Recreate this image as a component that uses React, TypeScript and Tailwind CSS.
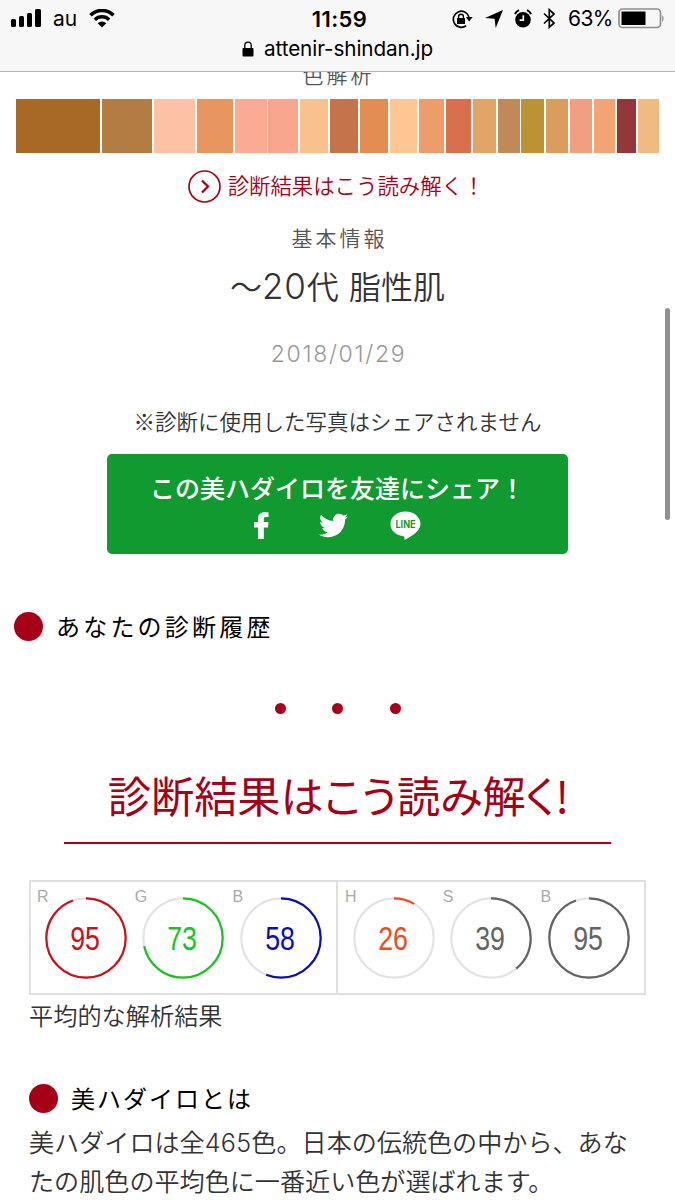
import { FaTwitter } from 'react-icons/fa';

const SWATCHES = [
  { color: '#a86826', width: 84 },
  { color: '#b37c42', width: 50 },
  { color: '#fdc1a5', width: 41 },
  { color: '#e7965f', width: 36 },
  { color: '#fbab94', width: 32 },
  { color: '#f8a68d', width: 30 },
  { color: '#f8c18d', width: 28 },
  { color: '#c5734a', width: 28 },
  { color: '#e48d53', width: 28 },
  { color: '#fcc793', width: 27 },
  { color: '#ed9d69', width: 25 },
  { color: '#d8704f', width: 25 },
  { color: '#e2a467', width: 23 },
  { color: '#bf8a57', width: 22 },
  { color: '#bc9234', width: 23 },
  { color: '#dc9c5d', width: 22 },
  { color: '#f29e83', width: 22 },
  { color: '#f2a475', width: 21 },
  { color: '#94363a', width: 19 },
  { color: '#f1ba82', width: 21 },
];

type Gauge = { label: string; value: number; ratio: number; color: string };

const RGB: Gauge[] = [
  { label: 'R', value: 95, ratio: 0.945, color: '#cc1019' },
  { label: 'G', value: 73, ratio: 0.715, color: '#16c41d' },
  { label: 'B', value: 58, ratio: 0.56, color: '#0d0cb8' },
];

const HSB: Gauge[] = [
  { label: 'H', value: 26, ratio: 0.085, color: '#f04a18' },
  { label: 'S', value: 39, ratio: 0.39, color: '#636363' },
  { label: 'B', value: 95, ratio: 0.945, color: '#636363' },
];

function StatusBar() {
  return (
    <div className="flex h-9 items-center pl-[11px] pr-[10px] pt-px text-black">
      <div className="flex flex-1 items-center">
        <svg width="31" height="19" viewBox="0 0 31 19">
          <rect x="0" y="10" width="5" height="8" rx="1.5" />
          <rect x="8" y="7" width="5" height="11" rx="1.5" />
          <rect x="16" y="4" width="5" height="14" rx="1.5" />
          <rect x="24" y="0" width="6" height="18" rx="1.5" />
        </svg>
        <span className="ml-[11px] text-[21px] leading-none">au</span>
        <svg className="ml-3" width="26" height="19" viewBox="0 0 26 19" fill="none" stroke="black">
          <path d="M1.5 6.3a16.2 16.2 0 0 1 23 0" strokeWidth="3.6" />
          <path d="M5.8 10.8a10.2 10.2 0 0 1 14.4 0" strokeWidth="3.4" />
          <path d="M13 18.5 8.7 14.2a6.1 6.1 0 0 1 8.6 0z" fill="black" stroke="none" />
        </svg>
      </div>
      <span className="ml-[3px] text-[22px] font-semibold leading-none tracking-[0.4px]">11:59</span>
      <div className="flex flex-1 items-center justify-end">
        <svg width="21" height="20" viewBox="0 0 21 20" fill="none" stroke="black" strokeWidth="1.7">
          <path d="M14.2 16.6A8 8 0 1 1 17 8" />
          <path d="M13.9 8h6.700l-3.400 4.400z" fill="black" stroke="none" />
          <rect x="5" y="9" width="8" height="6" rx="0.6" fill="black" stroke="none" />
          <path d="M6.6 9.5V7.6a2.4 2.4 0 0 1 4.8 0v1.9" strokeWidth="1.4" />
        </svg>
        <svg className="ml-[12px]" width="18" height="18" viewBox="0 0 18 18">
          <path d="M18 0 10.7 18 9.6 8.8 0 7.9z" />
        </svg>
        <svg className="ml-[11px]" width="18" height="19" viewBox="0 0 18 19">
          <circle cx="9" cy="10.7" r="7.8" />
          <path d="M0.9 4.9A9 9 0 0 1 5 1.2M17.1 4.9A9 9 0 0 0 13 1.2" fill="none" stroke="black" strokeWidth="2" />
          <path d="M9.3 6.2v5H5.6" fill="none" stroke="white" strokeWidth="1.7" />
        </svg>
        <svg className="ml-[11px]" width="13" height="21" viewBox="0 0 13 21" fill="none" stroke="black" strokeWidth="1.7">
          <path d="M1 5.5 11 15 6.3 19.3V1.7L11 6 1 15.5" />
        </svg>
        <span className="ml-[12px] text-[21px] leading-none tracking-[-0.5px]">63%</span>
        <svg className="ml-[5px]" width="47" height="21" viewBox="0 0 47 21">
          <rect x="1" y="1" width="41.5" height="18.5" rx="3.5" fill="none" stroke="#8d8d8d" strokeWidth="1.7" />
          <rect x="3.5" y="3.5" width="24" height="13.5" />
          <path d="M44.2 7a5 5 0 0 1 0 7z" fill="#8d8d8d" />
        </svg>
      </div>
    </div>
  );
}

function AddressBar() {
  return (
    <div className="flex h-[35px] items-center justify-center pb-[10px] text-black">
      <svg width="12" height="16" viewBox="0 0 12 16">
        <rect x="0.5" y="7" width="11" height="8.5" rx="1" />
        <path d="M2.8 7.5V4.4a3.2 3.2 0 0 1 6.4 0v3.1" fill="none" stroke="black" strokeWidth="1.3" />
      </svg>
      <span className="ml-2.5 text-[20.7px] leading-6 tracking-[-0.1px]">attenir-shindan.jp</span>
    </div>
  );
}

function FacebookIcon() {
  return (
    <svg width="15" height="28" viewBox="0 0 15 28" fill="white">
      <path d="M4 27V15.500H0V10H4V7C4 2.500 6.500.3 10.500.3H14.500V5H12C10.200 5 9.800 5.800 9.800 7.300V10H14.500L14 15.500H9.800V27z" />
    </svg>
  );
}

function LineIcon() {
  return (
    <svg width="31" height="29" viewBox="0 0 31 29">
      <path d="M15.5 0.5C7 .5.5 6 .5 13c0 6.500 5 11 12.500 12.200 1.500.3 1.700.9 1.400 2.800-.1.800.3 1 1 .6C20 26 30.500 20.500 30.500 13 30.500 6 24 .5 15.500 .5z" fill="white" />
      <text x="15.5" y="16.6" textAnchor="middle" fontSize="10" fontWeight="700" textLength="20" lengthAdjust="spacingAndGlyphs" fill="#119a30">LINE</text>
    </svg>
  );
}

function GaugeCell({ label, value, ratio, color }: Gauge) {
  const length = 2 * Math.PI * 39.7;
  return (
    <div className="relative h-full w-[97.7px] pt-[15px]">
      <span className="absolute -left-px top-[5px] font-['Liberation_Sans'] text-[16px] leading-5 text-[#aaa]">{label}</span>
      <div className="relative ml-[6.5px] h-[82px] w-[82px]">
        <svg width="82" height="82" viewBox="0 0 82 82" fill="none" strokeWidth="2.2">
          <circle cx="41" cy="41" r="39.7" stroke="#e3e3e3" />
          <circle cx="41" cy="41" r="39.7" stroke={color} transform="rotate(-90 41 41)" strokeDasharray={`${length * ratio} ${length}`} />
        </svg>
        <span
          className="absolute inset-0 -left-[2px] flex scale-x-[0.81] items-center justify-center font-['Liberation_Sans'] text-[33px] leading-none"
          style={{ color }}
        >
          {value}
        </span>
      </div>
    </div>
  );
}

function SectionHeading({ children, className }: { children: string; className: string }) {
  return (
    <h2 className={`flex h-[30px] items-center text-[24px] font-normal text-black ${className}`}>
      <span className="mr-[13px] h-[29px] w-[29px] shrink-0 rounded-full bg-[#a60018]" />
      {children}
    </h2>
  );
}

export default function App() {
  return (
    <div className="relative flex h-[1200px] w-[675px] flex-col overflow-hidden bg-white font-['Inter','Noto_Sans_CJK_JP',sans-serif]">
      <header className="h-[72px] shrink-0 border-b border-[#b2b2b2] bg-[#f7f7f7]">
        <StatusBar />
        <AddressBar />
      </header>

      <main className="flex h-[1128px] flex-col overflow-hidden font-['Noto_Sans_CJK_JP',sans-serif] font-[350] text-[#333]">
        <section className="flex flex-col items-center">
          <p className="-mt-[10px] h-6 pl-0.5 text-[21px] leading-6 tracking-[3px] text-[#555]">色解析</p>

          <div className="mt-[13px] flex h-[54px] w-[643px] justify-between">
            {SWATCHES.map(s => (
              <div key={s.color} style={{ backgroundColor: s.color, width: s.width }} />
            ))}
          </div>

          <a className="mt-[17px] mr-[3px] flex h-8 items-center text-[21.4px] text-[#a60018]">
            <svg className="mr-[7px]" width="33" height="33" viewBox="0 0 33 33" fill="none" stroke="currentColor">
              <circle cx="16.500" cy="16.500" r="15.500" strokeWidth="1.700" />
              <path d="m14 10.500 6 6-6 6" strokeWidth="2.300" />
            </svg>
            <span className="-mt-0.5">診断結果はこう読み解く！</span>
          </a>

          <p className="mt-[20px] h-[30px] pl-1 text-[21px] leading-[30px] tracking-[3px] text-[#555]">基本情報</p>
          <p className="mt-3 h-[42px] text-[32px] leading-[42px]">
            ～<span className="font-['Inter'] text-[35px] font-light leading-none tracking-[0.8px]">20</span>代{' '}
            <span className="ml-[3px]">脂性肌</span>
          </p>
          <p className="mt-[33px] h-[30px] pl-[2px] font-['Inter'] text-[23px] font-light leading-[30px] tracking-[1.7px] text-[#999]">2018/01/29</p>
          <p className="mt-[37px] h-[30px] text-[21.5px] leading-[30px]">※診断に使用した写真はシェアされません</p>

          <div className="mt-[18px] flex h-[100px] w-[461px] flex-col items-center rounded-[5px] bg-[#119a30] pt-[18px] text-white">
            <span className="h-8 text-[25px] font-medium leading-[31px]">この美ハダイロを友達にシェア！</span>
            <div className="mt-[7px] flex h-[29px] items-center">
              <FacebookIcon />
              <FaTwitter className="ml-[50px] h-[29px] w-[29px]" />
              <span className="ml-[42px] font-['Inter']"><LineIcon /></span>
            </div>
          </div>
        </section>

        <section className="ml-[14px] mt-[57px]">
          <SectionHeading className="tracking-[3.2px]">あなたの診断履歴</SectionHeading>
        </section>

        <div className="mt-[62px] flex h-[11px] justify-center gap-[46.500px]">
          <span className="h-[11px] w-[11px] rounded-full bg-[#a60018]" />
          <span className="h-[11px] w-[11px] rounded-full bg-[#a60018]" />
          <span className="h-[11px] w-[11px] rounded-full bg-[#a60018]" />
        </div>

        <h1 className="mx-auto mt-[53px] h-[78px] w-[547px] whitespace-nowrap border-b-2 border-[#a60018] pl-0.5 text-center text-[43.2px] font-normal leading-[55px] text-[#a60018] [font-feature-settings:'palt']">
          診断結果はこう読み解く!
        </h1>

        <section className="ml-[29px] mt-9 w-[617px]">
          <div className="flex h-[115px] border-2 border-[#e0e0e0]">
            <div className="flex w-[307px] border-r-2 border-[#e0e0e0] pl-[7px]">
              {RGB.map(g => <GaugeCell key={g.label} {...g} />)}
            </div>
            <div className="flex pl-[8px]">
              {HSB.map(g => <GaugeCell key={g.label} {...g} />)}
            </div>
          </div>
          <p className="mt-[5px] h-[30px] text-[24.2px] leading-[30px]">平均的な解析結果</p>

          <div className="mt-[53px]">
            <SectionHeading className="tracking-[2px]">美ハダイロとは</SectionHeading>
          </div>
          <p className="mt-[9px] whitespace-nowrap text-[25.1px] leading-[39px]">
            美ハダイロは全<span className="font-['Inter'] font-light leading-none tracking-[0.3px]">465</span>色。日本の伝統色の中から、あな
            <br />
            たの肌色の平均色に一番近い色が選ばれます。
          </p>
        </section>
      </main>

      {/* scroll indicator */}
      <div className="absolute left-[665px] top-[308px] h-[212px] w-[5px] rounded-full bg-[#909090]" />
    </div>
  );
}
